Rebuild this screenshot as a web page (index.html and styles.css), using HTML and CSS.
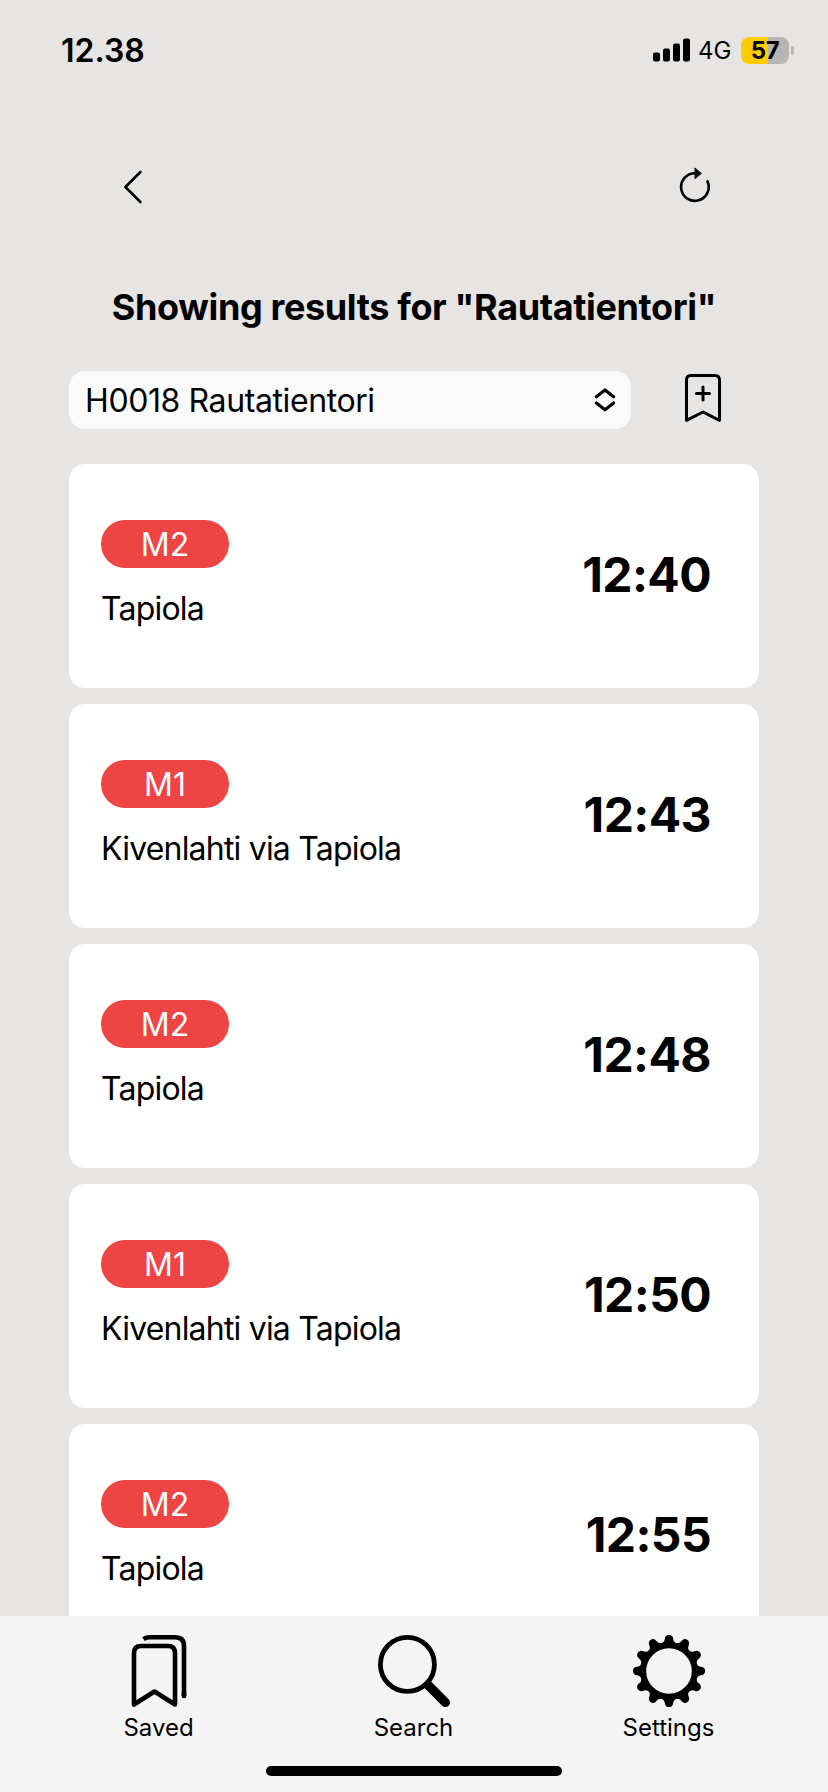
FILE: index.html
```html
<!DOCTYPE html>
<html lang="en">

<head>
    <meta charset="UTF-8">
    <meta name="viewport" content="width=device-width, initial-scale=1.0">
    <title>Rautatientori - Departures</title>
    <link rel="stylesheet" href="styles.css">
</head>

<body>
    <div id="app">
        <div class="status-bar">
            <span class="clock">12.38</span>
            <div class="status-icons">
                <svg class="signal" width="37" height="24" viewBox="0 0 37 24">
                    <rect x="0" y="14.5" width="7" height="9" rx="2"/>
                    <rect x="10" y="10.5" width="7" height="13" rx="2"/>
                    <rect x="20" y="5.5" width="7" height="18" rx="2"/>
                    <rect x="30" y="0.5" width="7" height="23" rx="2"/>
                </svg>
                <span class="network">4G</span>
                <div class="battery">57</div>
                <div class="battery-cap"></div>
            </div>
        </div>

        <header>
            <button class="icon-btn" aria-label="Back">
                <svg width="20" height="36" viewBox="0 0 20 36" fill="none" stroke="#000" stroke-width="2.6" stroke-linecap="round" stroke-linejoin="round">
                    <path d="M17.4 3 L2.4 18 L17.4 33"/>
                </svg>
            </button>
            <button class="icon-btn" aria-label="Refresh">
                <svg width="32" height="40" viewBox="0 0 32 40" fill="none" stroke="#000" stroke-width="2.6" stroke-linecap="round">
                    <path d="M28.5 14.4 A13.8 13.8 0 1 1 16 6.2"/>
                    <path d="M16.2 1.2 L22.4 6.4 L16.2 11.4 Z" fill="#000" stroke-width="0.9" stroke-linejoin="round"/>
                </svg>
            </button>
        </header>

        <h1>Showing results for "Rautatientori"</h1>

        <div class="stop-row">
            <div class="stop-select">
                <span>H0018 Rautatientori</span>
                <svg width="22" height="26" viewBox="0 0 22 26" fill="none" stroke="#000" stroke-width="3.2" stroke-linecap="round" stroke-linejoin="round">
                    <path d="M2.4 9.7 L11 2.9 L19.6 9.7"/>
                    <path d="M2.4 16 L11 22.8 L19.6 16"/>
                </svg>
            </div>
            <button class="icon-btn" aria-label="Save stop">
                <svg width="36" height="48" viewBox="0 0 36 48" fill="none" stroke="#000" stroke-width="3" stroke-linecap="round" stroke-linejoin="round">
                    <path d="M1.5 46.3 V6 Q1.5 1.5 6 1.5 H30 Q34.5 1.5 34.5 6 V46.3 L18 38 Z"/>
                    <path d="M18 13 V26 M11.5 19.5 H24.5"/>
                </svg>
            </button>
        </div>

        <main class="departures">
            <div class="card">
                <div class="route">
                    <span class="line">M2</span>
                    <p>Tapiola</p>
                </div>
                <b class="time">12:40</b>
            </div>
            <div class="card">
                <div class="route">
                    <span class="line">M1</span>
                    <p>Kivenlahti via Tapiola</p>
                </div>
                <b class="time">12:43</b>
            </div>
            <div class="card">
                <div class="route">
                    <span class="line">M2</span>
                    <p>Tapiola</p>
                </div>
                <b class="time">12:48</b>
            </div>
            <div class="card">
                <div class="route">
                    <span class="line">M1</span>
                    <p>Kivenlahti via Tapiola</p>
                </div>
                <b class="time">12:50</b>
            </div>
            <div class="card">
                <div class="route">
                    <span class="line">M2</span>
                    <p>Tapiola</p>
                </div>
                <b class="time">12:55</b>
            </div>
        </main>

        <nav>
            <a class="tab">
                <svg width="72" height="72" viewBox="0 0 72 72" fill="none" stroke="#000" stroke-width="4.6" stroke-linecap="round" stroke-linejoin="round">
                    <path d="M11 69.5 V18 Q11 11 18 11 H45 Q52 11 52 18 V69.5 L31.5 56.5 Z"/>
                    <path d="M20.5 4.2 Q23 2.3 27 2.3 H52 Q61 2.3 61 11 V61" stroke-linecap="butt"/>
                    <path d="M61 58 V61"/>
                </svg>
                <span>Saved</span>
            </a>
            <a class="tab">
                <svg width="72" height="72" viewBox="0 0 72 72" fill="none" stroke="#000">
                    <circle cx="29.4" cy="29.4" r="27" stroke-width="4.8"/>
                    <path d="M50 50 L67.4 67.4" stroke-width="9.2" stroke-linecap="round"/>
                </svg>
                <span>Search</span>
            </a>
            <a class="tab">
                <svg width="72" height="72" viewBox="-36 -36 72 72">
                    <defs>
                        <path id="tooth" d="M-8 -27.5 Q-4.6 -28.6 -4.2 -32 A4.2 4.2 0 0 1 4.2 -32 Q4.6 -28.6 8 -27.5 Z"/>
                    </defs>
                    <circle r="25.8" fill="none" stroke="#000" stroke-width="6"/>
                    <use href="#tooth"/>
                    <use href="#tooth" transform="rotate(30)"/>
                    <use href="#tooth" transform="rotate(60)"/>
                    <use href="#tooth" transform="rotate(90)"/>
                    <use href="#tooth" transform="rotate(120)"/>
                    <use href="#tooth" transform="rotate(150)"/>
                    <use href="#tooth" transform="rotate(180)"/>
                    <use href="#tooth" transform="rotate(210)"/>
                    <use href="#tooth" transform="rotate(240)"/>
                    <use href="#tooth" transform="rotate(270)"/>
                    <use href="#tooth" transform="rotate(300)"/>
                    <use href="#tooth" transform="rotate(330)"/>
                </svg>
                <span>Settings</span>
            </a>
            <div class="home-indicator"></div>
        </nav>
    </div>
</body>

</html>
```
FILE: styles.css
```css
* {
    margin: 0;
    padding: 0;
    box-sizing: border-box;
    font-family: Inter, "Liberation Sans", sans-serif;
}

body {
    background-color: #e6e5e3;
    color: #000;
}

#app {
    display: flex;
    flex-direction: column;
    height: 1792px;
    overflow: hidden;
}

svg {
    display: block;
}

/* phone status bar */
.status-bar {
    display: flex;
    justify-content: space-between;
    align-items: center;
    height: 100px;
    padding: 0 34px 0 61px;
    flex-shrink: 0;
}

.clock {
    font-size: 32px;
    font-weight: 600;
}

.status-icons {
    display: flex;
    align-items: center;
}

.network {
    margin-left: 8px;
    width: 43px;
    font-size: 24px;
}

.battery {
    width: 48px;
    height: 27px;
    border-radius: 8px;
    background: linear-gradient(to right, #ffcc00 27px, #b7b6b5 27px);
    font-size: 24px;
    font-weight: 700;
    letter-spacing: -0.5px;
    line-height: 27px;
    text-align: center;
}

.battery-cap {
    width: 3px;
    height: 9px;
    margin-left: 2px;
    border-radius: 0 4px 4px 0;
    background-color: #b7b6b5;
}

header {
    display: flex;
    justify-content: space-between;
    align-items: center;
    height: 174px;
    padding: 0 117px 0 123px;
    flex-shrink: 0;
}

.icon-btn {
    background: none;
    border: none;
    cursor: pointer;
}

h1 {
    height: 66px;
    font-size: 36px;
    font-weight: 700;
    letter-spacing: -0.37px;
    line-height: 66px;
    text-align: center;
    white-space: nowrap;
}

.stop-row {
    display: flex;
    justify-content: space-between;
    margin: 31px 107px 35px 69px;
}

.stop-row .icon-btn {
    margin-top: 3px;
    height: 48px;
}

.stop-select {
    display: flex;
    justify-content: space-between;
    align-items: center;
    width: 562px;
    height: 58px;
    padding: 0 15px 0 16px;
    border-radius: 16px;
    background-color: #fafafa;
    font-size: 32px;
    letter-spacing: -0.4px;
}

.departures {
    display: flex;
    flex-direction: column;
    flex: 1;
    gap: 16px;
    min-height: 0;
    padding: 0 69px;
    overflow: hidden;
}

.card {
    display: flex;
    justify-content: space-between;
    align-items: center;
    height: 224px;
    padding: 0 48px 0 32px;
    border-radius: 16px;
    background-color: #fff;
    flex-shrink: 0;
}

.route {
    display: flex;
    flex-direction: column;
    gap: 16px;
}

.line {
    width: 128px;
    height: 48px;
    border-radius: 24px;
    background-color: #ef4444;
    color: #fff;
    font-size: 32px;
    line-height: 50px;
    text-align: center;
}

.route p {
    height: 48px;
    font-size: 32px;
    letter-spacing: -0.8px;
    line-height: 50px;
}

.time {
    margin-bottom: 4px;
    font-size: 48px;
    letter-spacing: -0.6px;
}

/* bottom tabs */
nav {
    position: relative;
    display: grid;
    grid-template-columns: repeat(3, 255px);
    height: 176px;
    padding: 19px 0 0 31px;
    background-color: #f4f4f4;
    flex-shrink: 0;
}

.tab {
    display: flex;
    flex-direction: column;
    align-items: center;
    font-size: 24px;
    line-height: 41px;
}

.home-indicator {
    position: absolute;
    left: 266px;
    bottom: 16px;
    width: 296px;
    height: 10px;
    border-radius: 5px;
    background-color: #000;
}
```
